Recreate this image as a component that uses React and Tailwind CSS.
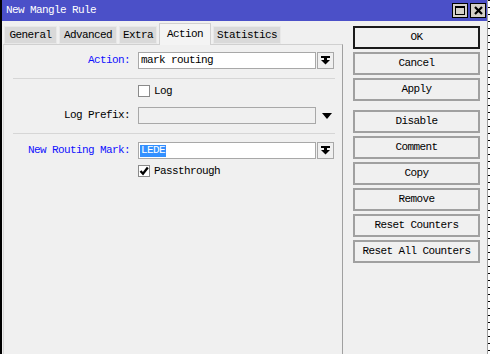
const font = { fontFamily: '"Liberation Mono", "DejaVu Sans Mono", monospace' };

const DropIcon = () => (
  <svg width="9" height="9" viewBox="0 0 9 9">
    <rect x="0" y="0" width="9" height="2" fill="#000" />
    <rect x="3" y="2" width="3" height="2" fill="#000" />
    <polygon points="0,4 9,4 4.5,8.5" fill="#000" />
  </svg>
);

const Checkbox = ({ checked, label }) => (
  <div className="flex items-center h-[12px]">
    <div className="w-[12px] h-[12px] border border-[#8a8a8a] bg-white flex items-center justify-center">
      {checked && (
        <svg width="10" height="10" viewBox="0 0 10 10">
          <polyline points="1.5,5 4,7.8 8.8,1.5" fill="none" stroke="#000" strokeWidth="2.3" />
        </svg>
      )}
    </div>
    <span className="ml-[4px] text-black">{label}</span>
  </div>
);

const Tab = ({ label, w, active }) => (
  <div
    className={
      active
        ? 'h-[22px] -mb-[1px] bg-[#f4f4f4] border border-b-0 border-[#d0d0d0] flex items-center justify-center'
        : 'h-[18px] bg-[#d9d9d9] border border-[#e8e8e8] flex items-center justify-center'
    }
    style={{ width: w }}
  >
    {label}
  </div>
);

const Button = ({ label, primary }) => (
  <div
    className={
      'h-[23px] w-[127px] bg-[#f0f0f0] flex items-center justify-center text-black ' +
      (primary ? 'border-2 border-[#1a1a1a]' : 'border-2 border-[#a0a0a0]')
    }
  >
    {label}
  </div>
);

export default function App() {
  const tabs = [
    { label: 'General', w: 53 },
    { label: 'Advanced', w: 58 },
    { label: 'Extra', w: 38 },
    { label: 'Action', w: 52, active: true },
    { label: 'Statistics', w: 68 },
  ];

  return (
    <div
      className="w-[490px] h-[354px] overflow-hidden flex bg-[#f0f0f0] text-[11px] tracking-[-0.6px] leading-none"
      style={font}
    >
      <div className="w-[488px] flex flex-col border-l-2 border-l-black border-r border-r-[#a0a0a0]">
        {/* title bar */}
        <div className="h-[21px] bg-[#4b50c8] flex items-center justify-between pl-[4px] pr-[1px]">
          <span className="text-white text-[11px]">New Mangle Rule</span>
          <div className="flex gap-[2px]">
            <div className="w-[16px] h-[15px] bg-[#d4d0c8] border border-black flex items-center justify-center">
              <svg width="10" height="9" viewBox="0 0 10 9">
                <rect x="0.5" y="0.5" width="9" height="8" fill="none" stroke="#000" />
                <rect x="0" y="0" width="10" height="2" fill="#000" />
              </svg>
            </div>
            <div className="w-[16px] h-[15px] bg-[#d4d0c8] border border-black flex items-center justify-center">
              <svg width="9" height="9" viewBox="0 0 9 9">
                <path d="M1 1 L8 8 M8 1 L1 8" stroke="#000" strokeWidth="2.2" />
              </svg>
            </div>
          </div>
        </div>

        <div className="flex flex-1">
          {/* left part */}
          <div className="w-[341px] flex flex-col">
            <div className="h-[23px] flex items-end gap-[2px] pl-[2px] relative z-10">
              {tabs.map((t) => (
                <Tab key={t.label} {...t} />
              ))}
            </div>
            <div className="flex-1 ml-[1px] border-t border-l border-t-[#d0d0d0] border-l-[#d8d8d8] border-r border-r-[#a0a0a0] flex flex-col">
              <div className="flex items-center mt-[7px] h-[17px]">
                <div className="w-[126px] text-right text-[#1010ff]">Action:</div>
                <div className="ml-[8px] w-[178px] h-[17px] bg-white border border-[#a8a8a8] flex items-center pl-[2px]">
                  mark routing
                </div>
                <div className="ml-[1px] w-[17px] h-[17px] border border-[#a8a8a8] bg-[#f0f0f0] flex items-center justify-center">
                  <DropIcon />
                </div>
              </div>

              <div className="mt-[9px] ml-[9px] mr-[7px] h-px bg-[#d6d6d6]" />

              <div className="mt-[6px] ml-[134px]">
                <Checkbox label="Log" />
              </div>

              <div className="flex items-center mt-[10px] h-[17px]">
                <div className="w-[126px] text-right text-black">Log Prefix:</div>
                <div className="ml-[8px] w-[178px] h-[17px] bg-[#f0f0f0] border border-[#a8a8a8]" />
                <div className="ml-[6px]">
                  <svg width="10" height="6" viewBox="0 0 10 6">
                    <polygon points="0,0 10,0 5,6" fill="#000" />
                  </svg>
                </div>
              </div>

              <div className="mt-[9px] ml-[9px] mr-[7px] h-px bg-[#d6d6d6]" />

              <div className="flex items-center mt-[8px] h-[17px]">
                <div className="w-[126px] text-right text-[#1010ff]">New Routing Mark:</div>
                <div className="ml-[8px] w-[178px] h-[17px] bg-white border border-[#a8a8a8] flex items-center pl-[1px]">
                  <span className="bg-[#3390ff] text-white h-[12px] flex items-center px-[1px]">LEDE</span>
                </div>
                <div className="ml-[1px] w-[17px] h-[17px] border border-[#a8a8a8] bg-[#f0f0f0] flex items-center justify-center">
                  <DropIcon />
                </div>
              </div>

              <div className="mt-[6px] ml-[134px]">
                <Checkbox checked label="Passthrough" />
              </div>
            </div>
          </div>

          {/* right buttons */}
          <div className="flex-1 flex flex-col gap-[3px] pt-[5px] pl-[10px]">
            <Button label="OK" primary />
            <Button label="Cancel" />
            <Button label="Apply" />
            <div className="h-[3px]" />
            <Button label="Disable" />
            <Button label="Comment" />
            <Button label="Copy" />
            <Button label="Remove" />
            <Button label="Reset Counters" />
            <Button label="Reset All Counters" />
          </div>
        </div>
      </div>
      <div className="w-[2px] h-full bg-[repeating-linear-gradient(to_bottom,#000_0px,#000_1px,#fff_1px,#fff_7px)]" />
    </div>
  );
}
